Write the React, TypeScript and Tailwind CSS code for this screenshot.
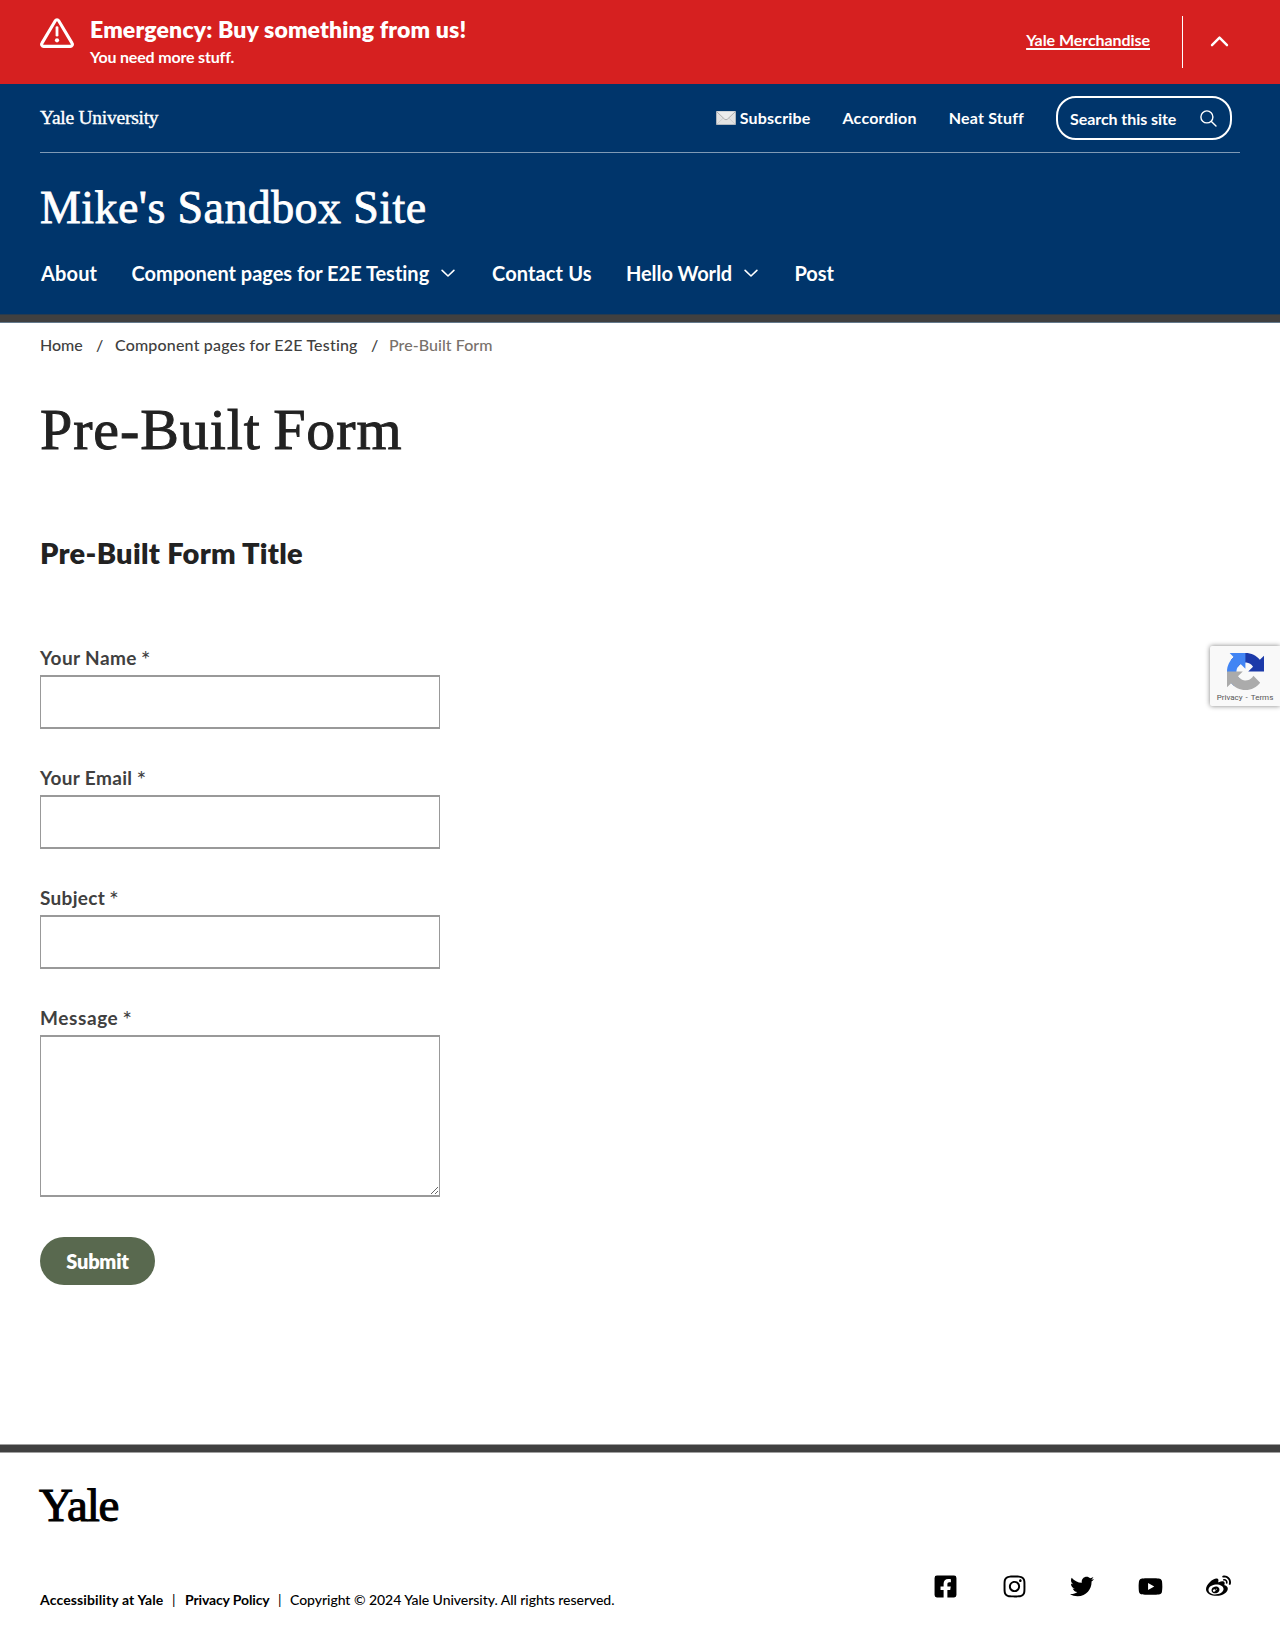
import { FaFacebookSquare, FaInstagram, FaTwitter, FaWeibo, FaYoutube } from 'react-icons/fa';

function AlertIcon() {
  return (
    <svg className="h-[30px] w-[34px]" viewBox="0 0 34 30" fill="none" stroke="white">
      <path d="M15.3 2.7a2 2 0 0 1 3.4 0l13.3 22.4a2.1 2.1 0 0 1-1.8 3.3H3.8A2.1 2.1 0 0 1 2 25.1z" strokeWidth="3.1" strokeLinejoin="round" />
      <path d="M17 9.6v7.6" strokeWidth="2.8" strokeLinecap="round" />
      <circle cx="17" cy="22.3" r="2.1" fill="white" stroke="none" />
    </svg>
  );
}

function Envelope() {
  return (
    <svg className="h-[14px] w-5" viewBox="0 0 20 14">
      <rect x="0.3" y="0.3" width="19.4" height="13.4" rx="0.8" fill="#e3e3e3" stroke="#bdbdbd" strokeWidth="0.6" />
      <path d="M0.8 13.2 7.5 6.7M19.2 13.2 12.5 6.7" stroke="#c9c9c9" strokeWidth="0.8" />
      <path d="M0.6 0.6 8.6 8.2q1.4 1.1 2.8 0L19.4 0.6" fill="#ececec" stroke="#a8a8a8" strokeWidth="0.9" />
    </svg>
  );
}

function ChevronDown() {
  return (
    <svg className="mt-px h-[9px] w-[14px]" viewBox="0 0 15 9" fill="none" stroke="white" strokeWidth="1.7" strokeLinecap="round" strokeLinejoin="round">
      <path d="M1.2 1.2 7.5 7.2 13.8 1.2" />
    </svg>
  );
}

function Recaptcha() {
  return (
    <aside className="absolute right-0 top-[646px] flex h-[60px] w-[70px] flex-col items-center rounded-l-[2px] bg-[#f9f9f9] pt-[7px] shadow-[0_0_5px_gray]">
      <svg className="h-[37px] w-[37px]" viewBox="0 0 64 64">
        <path fill="#1c3aa9" d="M64 31.955l-.033-1.37V4.687l-7.16 7.16C50.948 4.674 42.033.093 32.05.093c-10.4 0-19.622 4.96-25.458 12.64l11.736 11.86a15.55 15.55 0 0 1 4.754-5.334c2.05-1.6 4.952-2.906 8.968-2.906.485 0 .86.057 1.135.163 4.976.393 9.288 3.14 11.828 7.124l-8.307 8.307L64 31.953" />
        <path fill="#4285f4" d="M31.862.094l-1.37.033H4.594l7.16 7.16C4.58 13.147 0 22.06 0 32.046c0 10.4 4.96 19.622 12.64 25.458L24.5 45.768a15.55 15.55 0 0 1-5.334-4.754c-1.6-2.05-2.906-4.952-2.906-8.968 0-.485.057-.86.163-1.135.393-4.976 3.14-9.288 7.124-11.828l8.307 8.307L31.86.095" />
        <path fill="#ababab" d="M.001 32.045l.033 1.37v25.898l7.16-7.16c5.86 7.173 14.774 11.754 24.76 11.754 10.4 0 19.622-4.96 25.458-12.64l-11.736-11.86a15.55 15.55 0 0 1-4.754 5.334c-2.05 1.6-4.952 2.906-8.968 2.906-.485 0-.86-.057-1.135-.163-4.976-.393-9.288-3.14-11.828-7.124l8.307-8.307-31.86.033" />
      </svg>
      <p className="mt-[3px] whitespace-nowrap font-['Roboto',sans-serif] text-[8px] leading-[10px] text-[#555]">
        Privacy<span className="px-[3px]">-</span>Terms
      </p>
    </aside>
  );
}

const fields = [
  { label: 'Your Name', className: 'tracking-[0.4px]' },
  { label: 'Your Email', className: 'tracking-[0.35px]' },
  { label: 'Subject', className: 'tracking-[0.3px]' },
];

function Label({ text, className }: { text: string; className: string }) {
  return (
    <label className="flex h-8 items-start gap-[4px] text-[19px] font-bold leading-[30px] text-[#404040]">
      <span className={className}>{text}</span>
      <span className="text-[23px] font-normal leading-[33px]">*</span>
    </label>
  );
}

export default function App() {
  return (
    <div className="relative h-[1641px] w-full overflow-hidden bg-white font-['Lato',sans-serif] text-[#222]">
      <section className="flex h-[84px] bg-[#d62020] px-10 text-white">
        <div className="pt-[18px]"><AlertIcon /></div>
        <div className="ml-[15px] flex-1 pt-[15px]">
          <h2 className="ml-px text-[23px] font-extrabold leading-7 tracking-[0.15px]">Emergency: Buy something from us!</h2>
          <p className="ml-px mt-0.5 text-[16px] font-bold leading-6 tracking-[-0.17px]">You need more stuff.</p>
        </div>
        <a className="mt-[28px] h-6 text-[16px] font-bold leading-6 tracking-[-0.06px] underline decoration-2 underline-offset-[2px]">Yale Merchandise</a>
        <div className="ml-8 mt-4 h-[52px] w-px bg-white" />
        <svg className="ml-[27px] mr-[11px] mt-[35px] h-3 w-[19px]" viewBox="0 0 19 12" fill="none" stroke="white" strokeWidth="2.4" strokeLinejoin="round" strokeLinecap="round">
          <path d="M2 10.2 9.5 2.6 17 10.2" />
        </svg>
      </section>

      <header className="h-[239px] border-b border-[#647a8d] bg-[#00356b] text-white">
        <div className="mx-10 flex h-[69px] items-center border-b border-[#7f9ab5]">
          <a className="-mt-px font-['Liberation_Serif',serif] text-[19.5px] leading-7 tracking-[-0.25px] [-webkit-text-stroke:0.4px_white]">Yale University</a>
          <nav className="ml-auto flex items-center text-[16px] font-bold leading-6">
            <a className="flex items-center gap-[4px]"><Envelope /><span className="tracking-[0.18px]">Subscribe</span></a>
            <a className="ml-8 tracking-[0.2px]">Accordion</a>
            <a className="ml-8 tracking-[0.2px]">Neat Stuff</a>
          </nav>
          <div className="ml-8 mr-2 flex h-11 w-44 items-center justify-between rounded-[20px] border-2 border-white pl-3 pr-[13px]">
            <span className="pt-0.5 text-[16px] font-bold leading-6 tracking-[-0.06px]">Search this site</span>
            <svg className="h-[17px] w-[17px]" viewBox="0 0 17 17" fill="none" stroke="white" strokeWidth="1.4" strokeLinecap="round">
              <circle cx="6.9" cy="6.9" r="6" />
              <path d="M11.4 11.4 16 16" />
            </svg>
          </div>
        </div>
        <div className="mx-10 pt-[27px]">
          <h1 className="font-['Liberation_Serif',serif] text-[46px] leading-[56px] tracking-[0.4px] [-webkit-text-stroke:0.8px_white]">Mike's Sandbox Site</h1>
        </div>
        <nav className="mx-10 mt-[22px] flex h-[30px] items-center pl-px text-[20px] font-bold leading-[30px]">
          <a className="w-[90.5px] tracking-[0.15px]">About</a>
          <a className="flex w-[360.5px] items-center"><span className="w-[309.5px] tracking-[-0.02px]">Component pages for E2E Testing</span><ChevronDown /></a>
          <a className="w-[134px] tracking-[0.12px]">Contact Us</a>
          <a className="flex w-[168.5px] items-center"><span className="w-[118px] tracking-[-0.08px]">Hello World</span><ChevronDown /></a>
          <a className="tracking-[-0.1px]">Post</a>
        </nav>
        <div className="mt-[26px] h-2 border-t border-[#263b50] bg-[#404040]" />
      </header>

      <main className="px-10">
        <nav className="mt-[10px] flex h-6 text-[16px] font-medium leading-6 text-[#404040]">
          <span className="w-14">Home</span>
          <span className="w-[19px]">/</span>
          <span className="w-[256px] tracking-[0.18px]">Component pages for E2E Testing</span>
          <span className="w-[18px]">/</span>
          <span className="tracking-[0.05px] text-[#78716b]">Pre-Built Form</span>
        </nav>
        <h2 className="mt-[38px] font-['Liberation_Serif',serif] text-[58px] leading-[70px] tracking-[0.9px] [-webkit-text-stroke:0.9px_#222] [word-spacing:-3px]">Pre-Built Form</h2>
        <h3 className="mt-[70px] text-[29px] font-extrabold leading-9 tracking-[0.28px]">Pre-Built Form Title</h3>
        <form className="mt-[72px] w-[400px]">
          {fields.map((field) => (
            <div key={field.label} className="mb-[34px] h-[86px]">
              <Label text={field.label} className={field.className} />
              <input className="block h-[54px] w-full border-x border-y-2 border-[#999] bg-white" />
            </div>
          ))}
          <Label text="Message" className="tracking-[0.6px]" />
          <textarea className="block h-[162px] w-full resize border-x border-y-2 border-[#999] bg-white" />
          <button type="button" className="mt-10 block h-[48px] w-[115px] rounded-full bg-[#59694f] text-[20px] font-extrabold leading-[49px] tracking-[-0.25px] text-white">Submit</button>
        </form>
      </main>

      <footer className="mt-[159px] border-t border-[#a0a0a0] text-black">
        <div className="h-[7px] bg-[#404040]" />
        <div className="h-px bg-[#a0a0a0]" />
        <div className="px-10">
          <p className="-ml-px mt-[24px] font-['Liberation_Serif',serif] text-[47px] leading-[56px] tracking-[-1.2px] [-webkit-text-stroke:1.1px_black]">Yale</p>
          <div className="mt-[30px] flex items-start justify-between">
            <div className="mt-[14px] flex pt-[13px] text-[14px] leading-5">
              <a className="w-[132px] font-bold tracking-[0.12px]">Accessibility at Yale</a>
              <span className="w-[13px]">|</span>
              <a className="w-[93px] font-bold tracking-[-0.13px]">Privacy Policy</a>
              <span className="w-[12px]">|</span>
              <span className="font-medium tracking-[-0.04px]">Copyright © 2024 Yale University. All rights reserved.</span>
            </div>
            <div className="mr-[9px] mt-[11px] flex w-[298px] items-center justify-between text-[25px]">
              <FaFacebookSquare className="w-[25px]" />
              <FaInstagram className="w-[25px]" />
              <FaTwitter className="w-[24px]" />
              <FaYoutube className="w-[25px]" />
              <FaWeibo className="w-[25px]" />
            </div>
          </div>
        </div>
      </footer>
      <Recaptcha />
    </div>
  );
}
